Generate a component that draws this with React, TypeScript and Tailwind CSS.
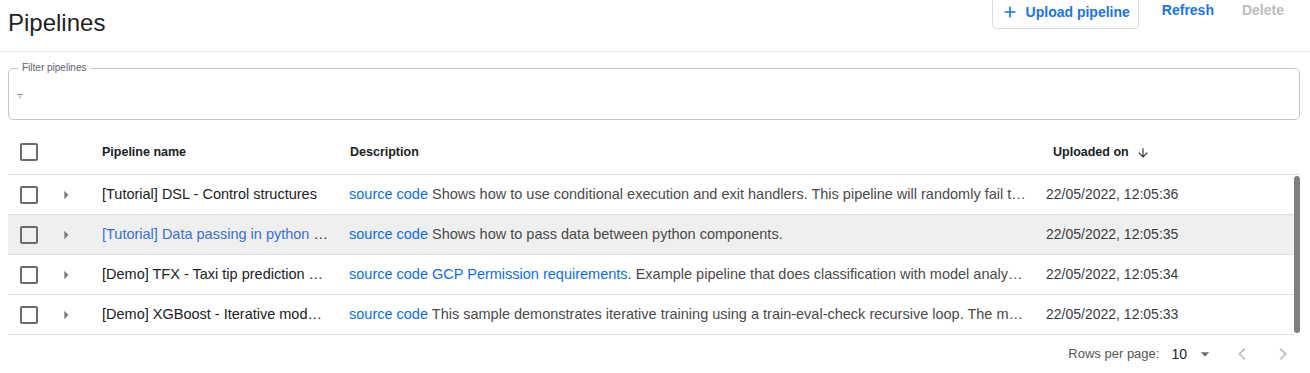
import type { ReactNode } from 'react'

interface PipelineRow {
  name: string
  description: ReactNode
  uploaded: string
  hover?: boolean
}

const link = 'text-[#0d6de7]'

const rows: PipelineRow[] = [
  {
    name: '[Tutorial] DSL - Control structures',
    description:
      'Shows how to use conditional execution and exit handlers. This pipeline will randomly fail to demonstrate that the exit handler gets executed even in case of a failure.',
    uploaded: '22/05/2022, 12:05:36',
  },
  {
    name: '[Tutorial] Data passing in python components',
    description: 'Shows how to pass data between python components.',
    uploaded: '22/05/2022, 12:05:35',
    hover: true,
  },
  {
    name: '[Demo] TFX - Taxi tip prediction model trainer',
    description: (
      <>
        <span className={link}>GCP Permission requirements</span>. Example pipeline that does classification with
        model analysis based on a public tax cab dataset.
      </>
    ),
    uploaded: '22/05/2022, 12:05:34',
  },
  {
    name: '[Demo] XGBoost - Iterative model training',
    description:
      'This sample demonstrates iterative training using a train-eval-check recursive loop. The main pipeline trains the initial model and then gradually trains the model some more until the model evaluation metrics are good enough.',
    uploaded: '22/05/2022, 12:05:33',
  },
]

function Checkbox() {
  return (
    <svg width="24" height="24" viewBox="0 0 24 24" className="text-[#6b6b6b]" aria-hidden>
      <path
        fill="currentColor"
        d="M19 5v14H5V5h14m0-2H5c-1.11 0-2 .9-2 2v14c0 1.1.89 2 2 2h14c1.1 0 2-.9 2-2V5c0-1.1-.9-2-2-2z"
      />
    </svg>
  )
}

function ExpandArrow() {
  return (
    <svg width="20" height="20" viewBox="0 0 24 24" className="text-[#7a7a7a]" aria-hidden>
      <path fill="currentColor" d="M10 17l5-5-5-5v10z" />
    </svg>
  )
}

export default function App() {
  return (
    <div className="h-[373px] w-full overflow-hidden bg-white font-['Liberation_Sans',Arial,sans-serif] text-[#202124]">
      <header className="flex h-[52px] items-start justify-between border-b border-[#e8e8e8]">
        <h1 className="pl-2 pt-2 text-[24px] leading-[30px] text-[#1f1f1f]">Pipelines</h1>
        <div className="flex items-start pr-[26px]">
          <button
            type="button"
            className="-mt-[2px] flex h-[31px] items-center gap-[10px] rounded-[4px] border border-[#dadce0] pb-[4px] pl-[11px] pr-[8px] text-[14px] font-bold leading-4 text-[#1a73e8]"
          >
            <svg width="12" height="12" viewBox="0 0 12 12" aria-hidden>
              <path d="M6 0.5v11M0.5 6h11" stroke="currentColor" strokeWidth="1.6" />
            </svg>
            Upload pipeline
          </button>
          <button type="button" className="ml-[23px] pt-[2px] text-[14px] font-bold leading-4 text-[#1a73e8]">
            Refresh
          </button>
          <button type="button" className="ml-[28px] pt-[2px] text-[14px] font-bold leading-4 text-[#bdbdbd]">
            Delete
          </button>
        </div>
      </header>

      <div className="pl-2 pr-[10px]">
        <fieldset className="mt-[10px] h-[58px] rounded-[5px] border border-[#c4c4c4]">
          <legend className="ml-[9px] px-[4px] text-[10px] leading-[12px] text-[#5f6368]">Filter pipelines</legend>
          <div className="flex h-[44px] items-center pl-[8px]">
            <svg width="6" height="5" viewBox="0 0 6 5" aria-hidden>
              <path d="M0 0h6v1H0z" fill="#9a9a9a" />
              <path d="M1 1.5h4L3.6 3v2H2.4V3z" fill="#c2c2c2" />
            </svg>
          </div>
        </fieldset>

        <div className="mt-[10px]">
          <div className="flex h-[45px] items-center border-b border-[#e0e0e0] text-[12.5px] font-bold text-[#202124]">
            <div className="flex w-[48px] pl-[9px]">
              <Checkbox />
            </div>
            <div className="w-[46px]" />
            <div className="w-[247px]">Pipeline name</div>
            <div className="w-[697px] pl-px">Description</div>
            <div className="flex flex-1 items-center gap-[7px] pl-[7px]">
              Uploaded on
              <svg width="14" height="14" viewBox="0 0 24 24" className="mt-[2px] text-[#333]" aria-hidden>
                <path fill="currentColor" d="M20 12l-1.41-1.41L13 16.17V4h-2v12.17l-5.58-5.59L4 12l8 8 8-8z" />
              </svg>
            </div>
          </div>

          <div className="flex">
            <div className="flex-1">
              {rows.map((row) => (
                <div
                  key={row.name}
                  className={`flex h-[40px] items-center border-b border-[#e0e0e0] text-[14.5px] ${
                    row.hover ? 'bg-[#efefef]' : ''
                  }`}
                >
                  <div className="flex w-[48px] pl-[9px]">
                    <Checkbox />
                  </div>
                  <div className="flex w-[46px] pl-0">
                    <ExpandArrow />
                  </div>
                  <div className="w-[247px] truncate pr-[20px] text-[#202124]">
                    <span className={row.hover ? 'text-[#3a6fd8]' : ''}>{row.name}</span>
                  </div>
                  <div className="w-[697px] truncate pr-[18px] text-[#4a4a4a]">
                    <span className={link}>source code</span> {row.description}
                  </div>
                  <div className="min-w-0 flex-1 whitespace-nowrap text-[14px] text-[#3c3c3c]">{row.uploaded}</div>
                </div>
              ))}
            </div>
            <div className="flex w-[6px] pb-[2px] pt-[1px]">
              <div className="w-full rounded-full bg-[#808080]" />
            </div>
          </div>
        </div>
      </div>

      <div className="flex h-[38px] items-center justify-end pr-[15px]">
        <span className="text-[13px] text-[#555]">Rows per page:</span>
        <span className="ml-[12px] text-[14px] text-[#202124]">10</span>
        <svg width="20" height="20" viewBox="0 0 24 24" className="ml-[8px] text-[#6b6b6b]" aria-hidden>
          <path fill="currentColor" d="M7 10l5 5 5-5z" />
        </svg>
        <svg width="24" height="24" viewBox="0 0 24 24" className="ml-[15px] text-[#c4c4c4]" aria-hidden>
          <path fill="currentColor" d="M15.41 7.41L14 6l-6 6 6 6 1.41-1.41L10.83 12z" />
        </svg>
        <svg width="24" height="24" viewBox="0 0 24 24" className="ml-[17px] text-[#c4c4c4]" aria-hidden>
          <path fill="currentColor" d="M10 6L8.59 7.41 13.17 12l-4.58 4.59L10 18l6-6z" />
        </svg>
      </div>
    </div>
  )
}
